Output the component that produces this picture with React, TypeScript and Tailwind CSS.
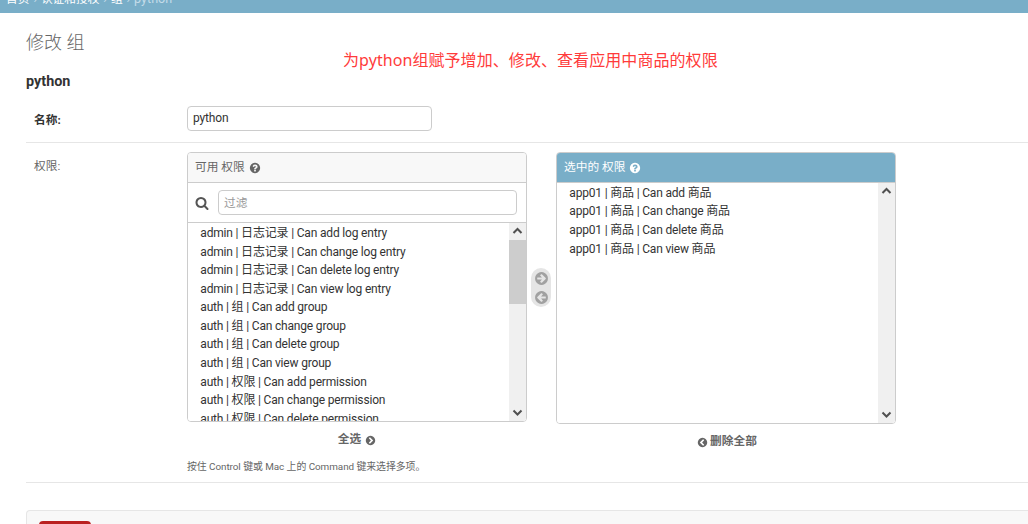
import React from "react";

const QUESTION =
  "M1024 1376v-192q0-14-9-23t-23-9h-192q-14 0-23 9t-9 23v192q0 14 9 23t23 9h192q14 0 23-9t9-23zm256-672q0-88-55.500-163t-138.500-116-170-41q-243 0-371 213-15 24 8 42l132 100q7 6 19 6 16 0 25-12 53-68 86-92 34-24 86-24 48 0 85.500 26t37.500 59q0 38-20 61t-68 45q-63 28-115.500 86.500t-52.500 125.500v36q0 14 9 23t23 9h192q14 0 23-9t9-23q0-19 21.500-49.500t54.500-49.500q32-18 49-28.500t46-35 44.500-48 28-60.500 12.500-81zm384 192q0 209-103 385.500t-279.500 279.500-385.500 103-385.500-103-279.500-279.500-103-385.500 103-385.500 279.500-279.500 385.500-103 385.500 103 279.500 279.500 103 385.500z";
const SEARCH =
  "M1216 832q0-185-131.500-316.500t-316.500-131.500-316.500 131.500-131.500 316.500 131.500 316.500 316.500 131.500 316.500-131.500 131.500-316.500zm512 832q0 52-38 90t-90 38q-54 0-90-38l-343-342q-179 124-399 124-143 0-273.500-55.500t-225-150-150-225-55.500-273.500 55.500-273.500 150-225 225-150 273.500-55.500 273.500 55.500 225 150 150 225 55.500 273.500q0 220-124 399l343 343q37 37 37 90z";
const ARROW_RIGHT =
  "M1413 896q0-27-18-45l-362-362-91-91q-18-18-45-18t-45 18l-91 91q-18 18-18 45t18 45l189 189h-502q-26 0-45 19t-19 45v128q0 26 19 45t45 19h502l-189 189q-19 19-19 45t19 45l91 91q18 18 45 18t45-18l362-362 91-91q18-18 18-45zm251 0q0 209-103 385.500t-279.500 279.500-385.500 103-385.500-103-279.500-279.500-103-385.500 103-385.500 279.500-279.500 385.500-103 385.500 103 279.500 279.500 103 385.500z";
const CHEVRON_RIGHT =
  "M845 1395l454-454q19-19 19-45t-19-45l-454-454q-19-19-45-19t-45 19l-102 102q-19 19-19 45t19 45l307 307-307 307q-19 19-19 45t19 45l102 102q19 19 45 19t45-19zm819-499q0 209-103 385.500t-279.500 279.500-385.500 103-385.500-103-279.500-279.500-103-385.500 103-385.500 279.500-279.500 385.500-103 385.500 103 279.500 279.500 103 385.500z";

function Icon({ d, className }: { d: string; className: string }) {
  return (
    <svg viewBox="0 0 1792 1792" className={"shrink-0 " + className} fill="currentColor" fillRule="evenodd" aria-hidden="true">
      <path d={d} />
    </svg>
  );
}

function Chevron({ down = false }: { down?: boolean }) {
  return (
    <svg viewBox="0 0 17 17" className="h-[17px] w-[17px] shrink-0" fill="none" stroke="#505050" strokeWidth="2">
      <path d={down ? "M4.500 6.500 8.500 10.500 12.500 6.500" : "M4.500 10 8.500 6 12.500 10"} />
    </svg>
  );
}

const available = [
  "admin | 日志记录 | Can add log entry",
  "admin | 日志记录 | Can change log entry",
  "admin | 日志记录 | Can delete log entry",
  "admin | 日志记录 | Can view log entry",
  "auth | 组 | Can add group",
  "auth | 组 | Can change group",
  "auth | 组 | Can delete group",
  "auth | 组 | Can view group",
  "auth | 权限 | Can add permission",
  "auth | 权限 | Can change permission",
  "auth | 权限 | Can delete permission",
];
const chosen = ["add", "change", "delete", "view"].map((a) => `app01 | 商品 | Can ${a} 商品`);

function Options({ items, thumb = false }: { items: string[]; thumb?: boolean }) {
  return (
    <div className="flex min-h-0 flex-1 overflow-hidden bg-white">
      <div
        className={
          "min-w-0 flex-1 overflow-hidden pl-[12.3px] text-[12px] tracking-[-0.18px] text-[#333] " +
          (thumb ? "pt-[1.2px]" : "pt-[0.9px]")
        }
      >
        {items.map((t) => (
          <div key={t} className="h-[18.55px] whitespace-nowrap leading-[18.55px]">
            {t}
          </div>
        ))}
      </div>
      <div className="flex w-[17px] flex-col bg-[#f0f0f0]">
        <Chevron />
        {thumb && <div className="h-16 bg-[#cdcdcd]" />}
        <div className="flex-1" />
        <Chevron down />
      </div>
    </div>
  );
}

export default function App() {
  return (
    <div className="h-[524px] w-[1028px] overflow-hidden bg-white font-['Roboto','Noto_Sans_CJK_SC',sans-serif] text-[11.7px] text-[#333]">
      <header className="flex h-[13px] items-end overflow-hidden bg-[#79aec8] pl-[6px] text-white">
        <div className="mb-[6px] flex h-4 items-center gap-[4px] whitespace-nowrap leading-4">
          <span>首页</span>
          <span className="text-[#c4dce8]">›</span>
          <span>认证和授权</span>
          <span className="text-[#c4dce8]">›</span>
          <span>组</span>
          <span className="text-[#c4dce8]">›</span>
          <span className="text-[12.6px] text-[#c4dce8]">python</span>
        </div>
      </header>
      <main className="pl-[26px]">
        <div className="flex h-[58px] items-start">
          <h1 className="w-[317px] pt-[17px] text-[18px] font-light leading-[26px] text-[#666]">修改 组</h1>
          <p className="whitespace-nowrap pt-[35px] font-['Noto_Sans','Noto_Sans_CJK_SC',sans-serif] text-[16px] leading-6 tracking-[0.07px] text-[#ff3b3b]">
            为python组赋予增加、修改、查看应用中商品的权限
          </p>
        </div>
        <h2 className="pt-[2px] text-[14.4px] font-bold leading-[18px]">python</h2>
        <div className="mt-[15px] flex h-[37px] border-b border-[#e6e6e6]">
          <label className="w-[161px] pl-2 pt-[5px] font-bold leading-[18px]">名称:</label>
          <div className="h-[25px] w-[245px] rounded-[4px] border border-[#ccc] pl-[5px] text-[12px] leading-[22px] tracking-[-0.17px]">python</div>
        </div>
        <section className="flex h-[340px] border-b border-[#e6e6e6] pt-[9px]">
          <label className="w-[161px] pl-2 pt-[5px] leading-[18px] text-[#666]">权限:</label>
          <div className="w-[340px]">
            <div className="flex h-[270px] flex-col overflow-hidden rounded-[4px] border border-[#ccc]">
              <div className="flex h-[30px] shrink-0 items-center gap-[4px] border-b border-[#ccc] bg-[#f8f8f8] pl-[7px] text-[#666]">
                <span>可用 权限</span>
                <Icon d={QUESTION} className="h-3 w-3" />
              </div>
              <div className="flex h-10 shrink-0 items-center border-b border-[#ccc] pl-[7px]">
                <Icon d={SEARCH} className="mt-px h-[14px] w-[14px] text-[#555]" />
                <div className="ml-[9px] h-[25px] w-[299px] rounded-[4px] border border-[#ccc] pl-[5px] leading-[24px] text-[#999]">过滤</div>
              </div>
              <Options items={available} thumb />
            </div>
            <div className="mt-[9px] flex h-[18px] items-center justify-center gap-[4px] font-bold text-[#666]">
              <span>全选</span>
              <Icon d={CHEVRON_RIGHT} className="mt-px h-[11px] w-[11px]" />
            </div>
            <p className="mt-[9px] whitespace-nowrap text-[9.9px] leading-[18px] tracking-[-0.05px] text-[#666]">
              按住 Control 键或 Mac 上的 Command 键来选择多项。
            </p>
          </div>
          <div className="ml-[4px] mt-[116px] flex h-[39px] w-5 flex-col items-center gap-[4px] rounded-[10px] bg-[#e5e5e5] pt-[3px] text-[#a1a1a1]">
            <Icon d={ARROW_RIGHT} className="h-[15px] w-[15px]" />
            <Icon d={ARROW_RIGHT} className="h-[15px] w-[15px] rotate-180" />
          </div>
          <div className="ml-[5px] w-[340px]">
            <div className="flex h-[272px] flex-col overflow-hidden rounded-[4px] border border-[#ccc]">
              <div className="flex h-[30px] shrink-0 items-center gap-[4px] border-b border-[#ccc] bg-[#79aec8] pl-[7px] text-white">
                <span>选中的 权限</span>
                <Icon d={QUESTION} className="h-3 w-3" />
              </div>
              <Options items={chosen} />
            </div>
            <div className="mt-[9px] flex h-[18px] items-center justify-center gap-[2px] pl-[2px] font-bold text-[#666]">
              <Icon d={CHEVRON_RIGHT} className="h-[11px] w-[11px] rotate-180" />
              <span>删除全部</span>
            </div>
          </div>
        </section>
        <div className="mt-[27px] h-[50px] rounded-tl-[4px] border-l border-t border-[#e6e6e6] bg-[#f8f8f8] pl-[12px] pt-[10px]">
          <div className="h-8 w-[52px] rounded-[4px] bg-[#ba2121]" />
        </div>
      </main>
    </div>
  );
}
